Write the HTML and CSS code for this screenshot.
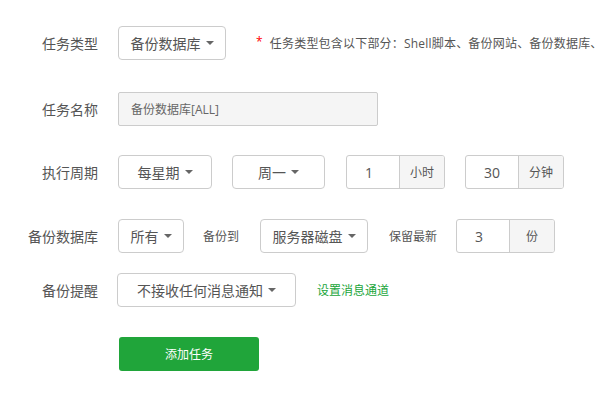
FILE: index.html
```html
<!DOCTYPE html>
<html lang="zh-CN">
<head>
<meta charset="utf-8">
<title>添加任务</title>
<link rel="stylesheet" href="styles.css">
</head>
<body>
<div class="form">
  <div class="row r1">
    <label class="lbl">任务类型</label>
    <div class="sel w108"><span>备份数据库</span><i class="caret"></i></div>
    <div class="note"><span class="star">*</span>任务类型包含以下部分：Shell脚本、备份网站、备份数据库、日志切割、释放内存、访问URL</div>
  </div>
  <div class="row r2">
    <label class="lbl">任务名称</label>
    <div class="txt">备份数据库[ALL]</div>
  </div>
  <div class="row r3">
    <label class="lbl">执行周期</label>
    <div class="sel w94"><span>每星期</span><i class="caret"></i></div>
    <div class="sel w93 ml20"><span>周一</span><i class="caret"></i></div>
    <div class="grp ml21"><div class="num">1</div><div class="add">小时</div></div>
    <div class="grp ml20"><div class="num">30</div><div class="add">分钟</div></div>
  </div>
  <div class="row r4">
    <label class="lbl">备份数据库</label>
    <div class="sel w66"><span>所有</span><i class="caret"></i></div>
    <span class="mid m1">备份到</span>
    <div class="sel w108"><span>服务器磁盘</span><i class="caret"></i></div>
    <span class="mid m2">保留最新</span>
    <div class="grp"><div class="num">3</div><div class="add">份</div></div>
  </div>
  <div class="row r5">
    <label class="lbl">备份提醒</label>
    <div class="sel w179"><span>不接收任何消息通知</span><i class="caret"></i></div>
    <a class="link">设置消息通道</a>
  </div>
  <div class="row r6">
    <span class="lbl"></span>
    <button class="btn">添加任务</button>
  </div>
</div>
</body>
</html>
```
FILE: styles.css
```css
html, body {
  margin: 0;
  padding: 0;
  background: #fff;
  overflow: hidden;
}
body {
  font-family: "Open Sans", "Noto Sans CJK SC", sans-serif;
  color: #555;
  width: 600px;
  height: 400px;
}
.form {
  padding-top: 26px;
  display: flex;
  flex-direction: column;
}
.row {
  display: flex;
  align-items: center;
  height: 34px;
  white-space: nowrap;
}
.r2 { margin-top: 32px; }
.r3 { margin-top: 29px; }
.r4 { margin-top: 30px; }
.r5 { margin-top: 20px; }
.r6 { margin-top: 30px; }
.lbl {
  width: 98px;
  flex: none;
  margin-right: 20px;
  text-align: right;
  font-size: 14px;
  color: #555;
}
.sel {
  box-sizing: border-box;
  height: 34px;
  border: 1px solid #ccc;
  border-radius: 4px;
  display: flex;
  align-items: center;
  justify-content: center;
  font-size: 14px;
  color: #555;
  flex: none;
}
.caret {
  display: inline-block;
  width: 0;
  height: 0;
  margin-left: 5px;
  border-top: 4px solid #666;
  border-left: 4px solid transparent;
  border-right: 4px solid transparent;
}
.w108 { width: 108px; }
.w94 { width: 94px; }
.w93 { width: 93px; }
.w66 { width: 66px; }
.w179 { width: 179px; margin-left: -1px; }
.ml20 { margin-left: 20px; }
.ml21 { margin-left: 21px; }
.note {
  margin-left: 30px;
  font-size: 12px;
  letter-spacing: 0.2px;
  color: #555;
  display: flex;
  align-items: center;
}
.star {
  color: #f00;
  font-size: 12px;
  margin-right: 7px;
  position: relative;
  top: -2px;
}
.txt {
  box-sizing: border-box;
  width: 260px;
  height: 34px;
  border: 1px solid #ccc;
  border-radius: 2px;
  background: #f5f5f5;
  font-size: 12px;
  color: #666;
  display: flex;
  align-items: center;
  padding-left: 12px;
}
.grp {
  display: flex;
  height: 34px;
  box-sizing: border-box;
  border: 1px solid #ccc;
  border-radius: 3px;
  overflow: hidden;
  flex: none;
}
.num {
  width: 52px;
  box-sizing: border-box;
  padding-left: 18px;
  display: flex;
  align-items: center;
  font-size: 14px;
  color: #555;
}
.add {
  width: 44px;
  border-left: 1px solid #ccc;
  background: #f5f5f5;
  display: flex;
  align-items: center;
  justify-content: center;
  font-size: 12px;
  color: #555;
}
.mid {
  font-size: 12px;
  color: #555;
}
.m1 { margin: 0 21px 0 19px; }
.m2 { margin: 0 19px 0 21px; }
.link {
  margin-left: 21px;
  font-size: 12px;
  color: #20a53a;
}
.btn {
  margin-left: 1px;
  width: 140px;
  height: 34px;
  border: none;
  border-radius: 3px;
  background: #20a53a;
  color: #fff;
  font-family: inherit;
  font-size: 12px;
}
```
